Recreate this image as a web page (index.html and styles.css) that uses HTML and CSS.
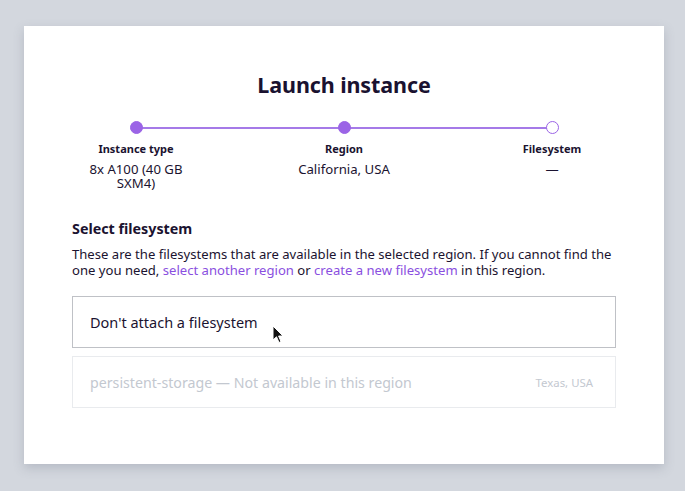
FILE: index.html
```html
<!DOCTYPE html>
<html>
<head>
<meta charset="utf-8">
<link rel="stylesheet" href="styles.css">
</head>
<body>
<div class="card">
  <h1 class="title">Launch instance</h1>
  <div class="stepper">
    <div class="track"></div>
    <div class="step">
      <span class="dot done"></span>
      <div class="step-label">Instance type</div>
      <div class="step-value">8x A100 (40 GB SXM4)</div>
    </div>
    <div class="step">
      <span class="dot done"></span>
      <div class="step-label">Region</div>
      <div class="step-value">California, USA</div>
    </div>
    <div class="step">
      <span class="dot"></span>
      <div class="step-label">Filesystem</div>
      <div class="step-value">—</div>
    </div>
  </div>
  <h2 class="section-title">Select filesystem</h2>
  <p class="desc">These are the filesystems that are available in the selected region. If you cannot find the one you need, <a class="link">select another region</a> or <a class="link">create a new filesystem</a> in this region.</p>
  <div class="options">
    <div class="option">
      <span>Don't attach a filesystem</span>
      <svg class="cursor" width="12" height="19" viewBox="0 0 12 19"><path d="M1 1 L1 15 L4.5 11.8 L7 17.5 L9 16.6 L6.6 11 L11 11 Z" fill="#111" stroke="#fff" stroke-width="1"/></svg>
    </div>
    <div class="option disabled">
      <span>persistent-storage — Not available in this region</span>
      <span class="region">Texas, USA</span>
    </div>
  </div>
</div>
</body>
</html>
```
FILE: styles.css
```css
* { box-sizing: border-box; }
html, body { margin: 0; padding: 0; }
body {
  background: #d3d7de;
  font-family: "Noto Sans", "Open Sans", sans-serif;
  color: #1b1330;
  padding: 26px 21px 27px 24px;
}
.card {
  width: 640px;
  height: 438px;
  background: #fff;
  box-shadow: 0 4px 10px rgba(90, 100, 120, 0.25);
  padding: 47px 48px 0 48px;
}
.title {
  margin: 0;
  text-align: center;
  font-size: 21.5px;
  font-weight: 700;
  line-height: 24px;
  color: #1a1230;
  letter-spacing: -0.1px;
}
.stepper {
  position: relative;
  display: flex;
  justify-content: space-between;
  margin-top: 24px;
}
.track {
  position: absolute;
  left: 64px;
  right: 64px;
  top: 6px;
  height: 2px;
  background: #a57ae8;
}
.step {
  width: 128px;
  display: flex;
  flex-direction: column;
  align-items: center;
  text-align: center;
  position: relative;
}
.dot {
  width: 13px;
  height: 13px;
  border-radius: 50%;
  border: 1.5px solid #9b64e6;
  background: #fff;
}
.dot.done { background: #9b64e6; }
.step-label {
  margin-top: 7px;
  font-size: 11px;
  font-weight: 700;
  line-height: 16px;
}
.step-value {
  margin-top: 6px;
  font-size: 13.2px;
  line-height: 13.5px;
  padding: 0 12px;
}
.section-title {
  margin: 29px 0 0 0;
  font-size: 14.3px;
  font-weight: 700;
  line-height: 20px;
}
.desc {
  margin: 7px 0 0 0;
  font-size: 13.1px;
  line-height: 16px;
  color: #1b1330;
}
.link {
  color: #8a4fe0;
  display: inline-block;
  line-height: 16px;
}
.options {
  margin-top: 18px;
  display: flex;
  flex-direction: column;
  gap: 8px;
}
.option {
  height: 52px;
  border: 1px solid #bfc1c6;
  display: flex;
  align-items: center;
  justify-content: space-between;
  padding: 0 22px 0 17px;
  font-size: 14.5px;
  position: relative;
}
.option.disabled {
  border-color: #e9ebee;
  color: #c3c8d0;
  font-size: 14.2px;
}
.region { font-size: 11.4px; }
.cursor {
  position: absolute;
  left: 199px;
  top: 28px;
}
```
